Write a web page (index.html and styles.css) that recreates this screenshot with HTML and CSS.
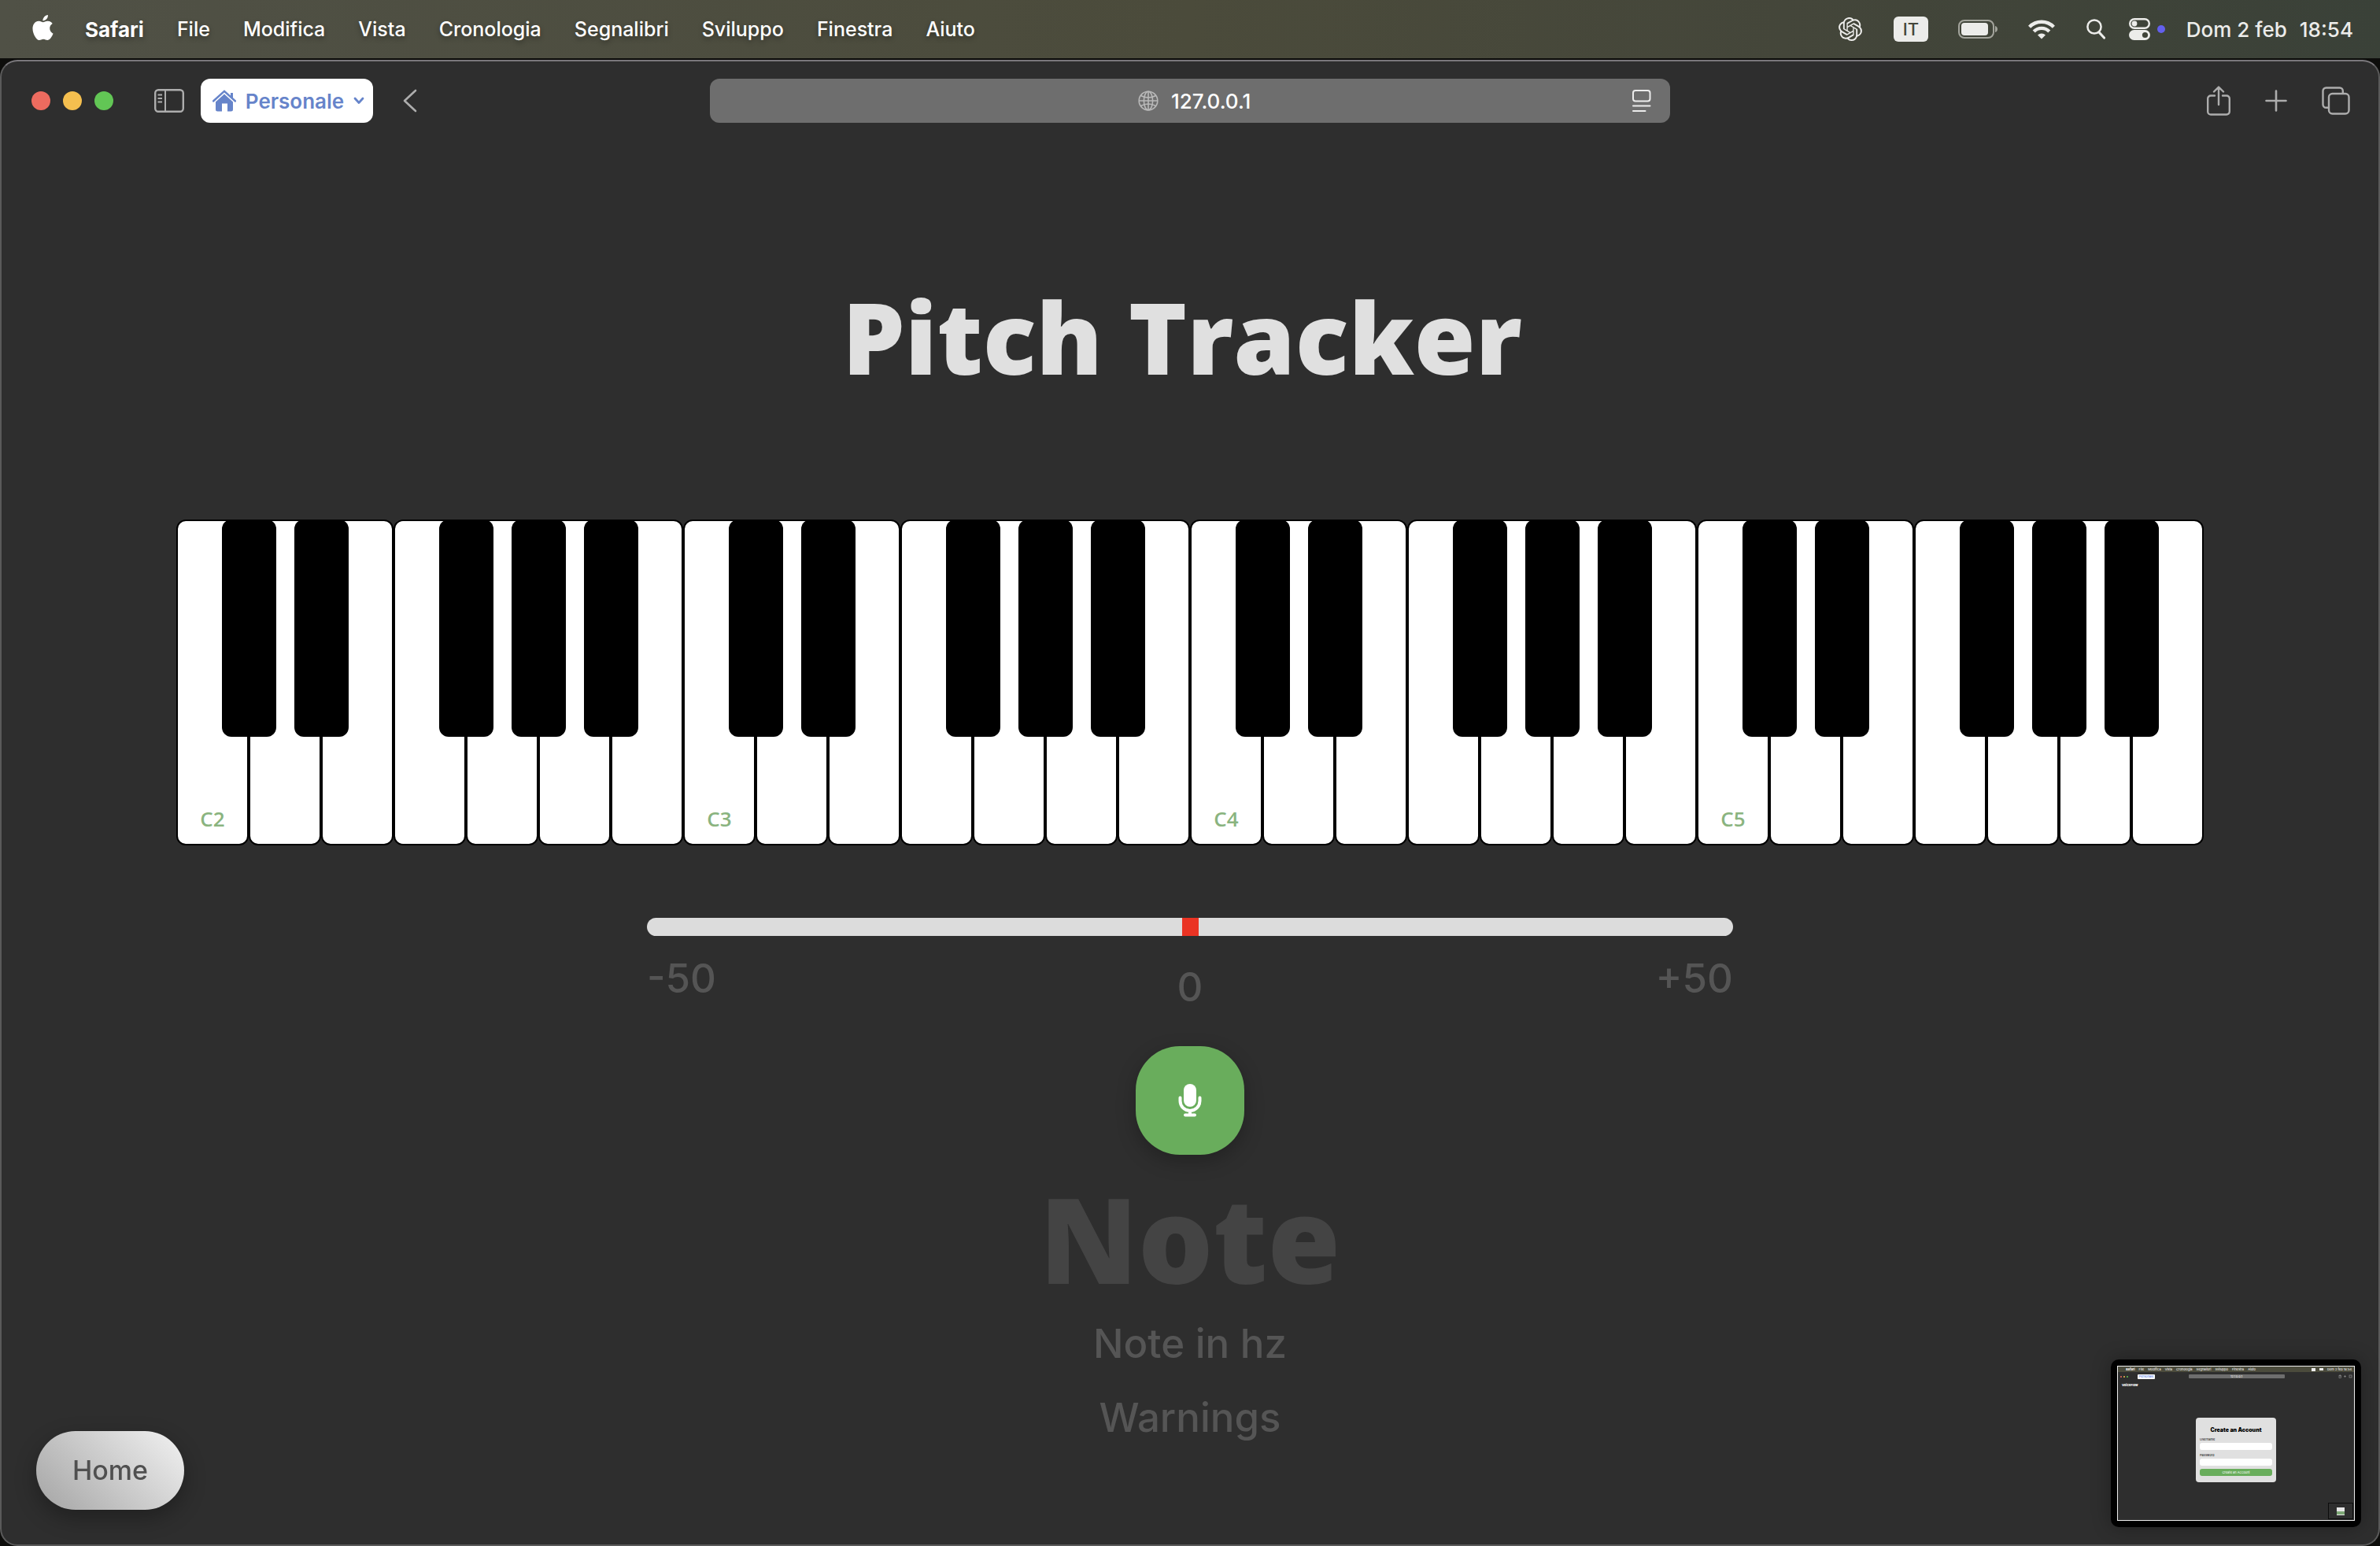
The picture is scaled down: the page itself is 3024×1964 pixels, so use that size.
FILE: index.html
```html
<!DOCTYPE html>
<html lang="it">
<head>
<meta charset="utf-8">
<meta name="viewport" content="width=device-width, initial-scale=1">
<title>Pitch Tracker</title>
<link rel="stylesheet" href="styles.css">
</head>
<body>
<header class="menubar">
  <nav class="menus">
    <svg class="apple" viewBox="2 0 20 24" width="27" height="32" fill="#fff"><path d="M12.152 6.896c-.948 0-2.415-1.078-3.96-1.04-2.04.027-3.91 1.183-4.961 3.014-2.117 3.675-.546 9.103 1.519 12.09 1.013 1.454 2.208 3.09 3.792 3.039 1.52-.065 2.09-.987 3.935-.987 1.831 0 2.35.987 3.96.948 1.637-.026 2.676-1.48 3.676-2.948 1.156-1.688 1.636-3.325 1.662-3.415-.039-.013-3.182-1.221-3.22-4.857-.026-3.04 2.48-4.494 2.597-4.559-1.429-2.09-3.623-2.324-4.39-2.376-2-.156-3.675 1.09-4.61 1.09zM15.53 3.83c.843-1.012 1.4-2.427 1.245-3.83-1.207.052-2.662.805-3.532 1.818-.78.896-1.454 2.338-1.273 3.714 1.338.104 2.715-.688 3.559-1.701"/></svg>
    <span class="app-name">Safari</span>
    <span>File</span>
    <span>Modifica</span>
    <span>Vista</span>
    <span>Cronologia</span>
    <span>Segnalibri</span>
    <span>Sviluppo</span>
    <span>Finestra</span>
    <span>Aiuto</span>
  </nav>
  <div class="status">
    <svg class="gpt" viewBox="0 0 24 24" width="30" height="30" fill="#ececea"><path d="M22.2819 9.8211a5.9847 5.9847 0 0 0-.5157-4.9108 6.0462 6.0462 0 0 0-6.5098-2.9A6.0651 6.0651 0 0 0 4.9807 4.1818a5.9847 5.9847 0 0 0-3.9977 2.9 6.0462 6.0462 0 0 0 .7427 7.0966 5.98 5.98 0 0 0 .511 4.9107 6.051 6.051 0 0 0 6.5146 2.9001A5.9847 5.9847 0 0 0 13.2599 24a6.0557 6.0557 0 0 0 5.7718-4.2058 5.9894 5.9894 0 0 0 3.9977-2.9001 6.0557 6.0557 0 0 0-.7475-7.0729zm-9.022 12.6081a4.4755 4.4755 0 0 1-2.8764-1.0408l.1419-.0804 4.7783-2.7582a.7948.7948 0 0 0 .3927-.6813v-6.7369l2.02 1.1686a.071.071 0 0 1 .038.052v5.5826a4.504 4.504 0 0 1-4.4945 4.4944zm-9.6607-4.1254a4.4708 4.4708 0 0 1-.5346-3.0137l.142.0852 4.783 2.7582a.7712.7712 0 0 0 .7806 0l5.8428-3.3685v2.3324a.0804.0804 0 0 1-.0332.0615L9.74 19.9502a4.4992 4.4992 0 0 1-6.1408-1.6464zM2.3408 7.8956a4.485 4.485 0 0 1 2.3655-1.9728V11.6a.7664.7664 0 0 0 .3879.6765l5.8144 3.3543-2.0201 1.1685a.0757.0757 0 0 1-.071 0l-4.8303-2.7865A4.504 4.504 0 0 1 2.3408 7.872zm16.5963 3.8558L13.1038 8.364 15.1192 7.2a.0757.0757 0 0 1 .071 0l4.8303 2.7913a4.4944 4.4944 0 0 1-.6765 8.1042v-5.6772a.79.79 0 0 0-.407-.667zm2.0107-3.0231l-.142-.0852-4.7735-2.7818a.7759.7759 0 0 0-.7854 0L9.409 9.2297V6.8974a.0662.0662 0 0 1 .0284-.0615l4.8303-2.7866a4.4992 4.4992 0 0 1 6.6802 4.66zM8.3065 12.863l-2.02-1.1638a.0804.0804 0 0 1-.038-.0567V6.0742a4.4992 4.4992 0 0 1 7.3757-3.4537l-.142.0805L8.704 5.459a.7948.7948 0 0 0-.3927.6813zm1.0976-2.3654l2.602-1.4998 2.6069 1.4998v2.9994l-2.5974 1.4997-2.6067-1.4997Z"/></svg>
    <span class="lang">IT</span>
    <svg class="battery" viewBox="0 0 51 24" width="51" height="24"><rect x="1" y="1" width="44" height="22" rx="7" fill="none" stroke="#a3a49c" stroke-width="2"/><rect x="4" y="4" width="34" height="16" rx="4" fill="#ececea"/><path d="M47 8c4 1 4 7 0 8z" fill="#a3a49c"/></svg>
    <svg class="wifi" viewBox="0 0 34 26" width="34" height="26"><g fill="none" stroke="#ececea" stroke-width="4.4"><path d="M1.6 10.2a21.6 21.6 0 0 1 30.800 0"/><path d="M7.200 16a13.800 13.800 0 0 1 19.600 0"/></g><path d="M17 25.500l-5-5a7.200 7.200 0 0 1 10 0z" fill="#ececea"/></svg>
    <svg class="search" viewBox="0 0 24 26" width="24" height="26" fill="none" stroke="#ececea" stroke-width="2.500"><circle cx="10" cy="10" r="8.600"/><path d="M16 17l6.500 7" stroke-width="3.200" stroke-linecap="round"/></svg>
    <div class="control">
      <svg viewBox="0 0 27 28" width="27" height="28"><rect x="1.200" y="1.200" width="24.600" height="11.600" rx="5.800" fill="none" stroke="#ececea" stroke-width="2.400"/><circle cx="7" cy="7" r="3.400" fill="#ececea"/><rect y="15" width="27" height="13" rx="6.500" fill="#ececea"/><circle cx="20.500" cy="21.500" r="3.600" fill="#3f4338"/></svg>
      <i class="live-dot"></i>
    </div>
    <time class="clock"><span>Dom 2 feb</span><span>18:54</span></time>
  </div>
</header>

<div class="window">
  <div class="toolbar">
    <div class="tools-left">
      <div class="lights"><i class="light red"></i><i class="light yellow"></i><i class="light green"></i></div>
      <button class="tool sidebar" aria-label="Barra laterale"><svg viewBox="0 0 38 30" width="38" height="30" fill="none" stroke="#adadad" stroke-width="2.400"><rect x="1.200" y="1.200" width="35.600" height="27.600" rx="4"/><path d="M14 1v28M4.500 7.500h5.500M4.500 12h5.500M4.500 16.500h5.500" stroke-width="2"/></svg></button>
      <button class="profile"><svg viewBox="0 0 30 28" width="30" height="28"><path d="M1 14.500L15 1.800 29 14.500" fill="none" stroke="#6684ca" stroke-width="2.400" stroke-linecap="round"/><path d="M23 4h3v7l-3-3z" fill="#6684ca"/><path d="M15 5.500l11 10V25a2.500 2.500 0 0 1-2.500 2.500H19V17.500h-7V27.500H6.500A2.500 2.500 0 0 1 4 25v-9.500z" fill="#6684ca"/></svg><span>Personale</span><svg class="caret" viewBox="0 0 14 10" width="14" height="10" fill="none" stroke="#6684ca" stroke-width="2.800" stroke-linecap="round" stroke-linejoin="round"><path d="M2 2l5 5.500L12 2"/></svg></button>
      <button class="tool back" aria-label="Indietro"><svg viewBox="0 0 18 30" width="18" height="30" fill="none" stroke="#adadad" stroke-width="2.600" stroke-linecap="round" stroke-linejoin="round"><path d="M16 2L2 15l14 13"/></svg></button>
    </div>
    <div class="address">
      <svg viewBox="0 0 26 26" width="26" height="26" fill="none" stroke="#b9b9b9" stroke-width="1.600"><circle cx="13" cy="13" r="11.800"/><ellipse cx="13" cy="13" rx="5.600" ry="11.800"/><path d="M13 1v24M1 13h24M3.500 6.500q9.500 5 19 0M3.500 19.500q9.500-5 19 0"/></svg>
      <input class="url" type="text" value="127.0.0.1" aria-label="Indirizzo">
      <button class="reader" aria-label="Menu pagina"><svg viewBox="0 0 24 28" width="24" height="28" fill="none" stroke="#ececec" stroke-width="2"><rect x="1" y="1" width="21.500" height="13.500" rx="3"/><path d="M1 20.500h21.500M1 27h15.500" stroke-linecap="round"/></svg></button>
    </div>
    <div class="tools-right">
      <button class="tool" aria-label="Condividi"><svg viewBox="0 0 30 38" width="30" height="38" fill="none" stroke="#adadad" stroke-width="2.400" stroke-linecap="round" stroke-linejoin="round"><path d="M10 12.500H5a3.800 3.800 0 0 0-3.800 3.800v16.400A3.800 3.800 0 0 0 5 36.500h20a3.800 3.800 0 0 0 3.800-3.800V16.300a3.800 3.800 0 0 0-3.800-3.800h-5M15 24V2M9 7.500L15 1.500l6 6"/></svg></button>
      <button class="tool" aria-label="Nuovo pannello"><svg viewBox="0 0 28 28" width="28" height="28" stroke="#adadad" stroke-width="2.600" stroke-linecap="round"><path d="M14 1.500v25M1.500 14h25"/></svg></button>
      <button class="tool" aria-label="Panoramica pannelli"><svg viewBox="0 0 36 36" width="36" height="36" fill="none" stroke="#adadad" stroke-width="2.400"><rect x="9" y="9" width="25.500" height="25.500" rx="4.500"/><path d="M9 26.800H5.500a4 4 0 0 1-4-4V5.500a4 4 0 0 1 4-4h17.300a4 4 0 0 1 4 4V9"/></svg></button>
    </div>
  </div>

  <main class="tracker">
    <h1 class="title">Pitch Tracker</h1>
    <div class="piano">
      <div class="key sharp"><span>C2</span></div><div class="key sharp"></div><div class="key"></div><div class="key sharp"></div><div class="key sharp"></div><div class="key sharp"></div><div class="key"></div>
      <div class="key sharp"><span>C3</span></div><div class="key sharp"></div><div class="key"></div><div class="key sharp"></div><div class="key sharp"></div><div class="key sharp"></div><div class="key"></div>
      <div class="key sharp"><span>C4</span></div><div class="key sharp"></div><div class="key"></div><div class="key sharp"></div><div class="key sharp"></div><div class="key sharp"></div><div class="key"></div>
      <div class="key sharp"><span>C5</span></div><div class="key sharp"></div><div class="key"></div><div class="key sharp"></div><div class="key sharp"></div><div class="key sharp"></div><div class="key"></div>
    </div>
    <div class="meter">
      <div class="bar"><i class="needle"></i></div>
      <div class="scale"><span>-50</span><span class="zero">0</span><span>+50</span></div>
    </div>
    <button class="mic" aria-label="Microfono"><svg viewBox="0 0 30 42" width="30" height="42"><rect x="7" y="0" width="16" height="29" rx="8" fill="#fff"/><path d="M2.500 17.500v4a12.500 12.500 0 0 0 25 0v-4M15 34v5M9 39.500h12" fill="none" stroke="#fff" stroke-width="4" stroke-linecap="round"/></svg></button>
    <p class="note">Note</p>
    <p class="detail">Note in hz</p>
    <p class="detail">Warnings</p>
  </main>
</div>

<a class="home" href="#">Home</a>

<aside class="preview">
  <div class="shot">
    <div class="mini-menubar"><b>Safari</b><span>File</span><span>Modifica</span><span>Vista</span><span>Cronologia</span><span>Segnalibri</span><span>Sviluppo</span><span>Finestra</span><span>Aiuto</span><i class="mini-lang"></i><i class="mini-battery"></i><span>Dom 2 feb 18:54</span></div>
    <div class="mini-toolbar">
      <div class="mini-left"><i class="red"></i><i class="yellow"></i><i class="green"></i><span class="mini-profile">Personale</span></div>
      <span class="mini-url">127.0.0.1</span>
      <div class="mini-right"><svg viewBox="0 0 18 5" width="18" height="5" fill="none" stroke="#999" stroke-width=".6"><rect x="1" y="1.500" width="2.500" height="3"/><path d="M2.200 0v3M7 2.500h3M8.500 1v3"/><rect x="14" y="1" width="3" height="3"/></svg></div>
    </div>
    <b class="mini-brand">VoiceFlow</b>
    <div class="mini-card">
      <h2>Create an Account</h2>
      <label for="user">Username</label><input id="user" type="text" tabindex="-1">
      <label for="pass">Password</label><input id="pass" type="password" tabindex="-1">
      <button tabindex="-1">Create an Account</button>
    </div>
    <div class="mini-thumb"><i></i></div>
  </div>
</aside>
</body>
</html>
```
FILE: styles.css
```css
* { box-sizing: border-box; }

body {
  margin: 0;
  min-height: 100vh;
  display: flex;
  flex-direction: column;
  gap: 2px;
  background: #0d0d0b;
  color: #fff;
  font-family: Inter, "Liberation Sans", sans-serif;
}

button, input { font: inherit; color: inherit; border: 0; padding: 0; background: none; }
p, h1, h2 { margin: 0; }
svg { display: block; }

/* System menu bar */
.menubar {
  height: 74px;
  flex: none;
  display: flex;
  justify-content: space-between;
  align-items: center;
  padding: 0 34px 0 41px;
  background: linear-gradient(90deg, #505146, #4b4b3b 50%, #44463a 75%, #3a4138);
  font-size: 25px;
  font-weight: 500;
}
.menus { display: flex; align-items: center; gap: 42px; text-shadow: 0 3px 6px rgba(0, 0, 0, .35); }
.apple { margin: -4px -2px 0 0; }
.app-name { font-size: 26px; font-weight: 700; }
.status { display: flex; align-items: center; color: #ececea; }
.gpt { margin-right: 40px; }
.lang {
  width: 44px;
  height: 32px;
  margin-right: 38px;
  border-radius: 6px;
  background: #ececea;
  color: #44463a;
  font-size: 22px;
  line-height: 32px;
  text-align: center;
}
.battery { margin-right: 38px; }
.wifi { margin-right: 40px; }
.search { margin-right: 30px; }
.control { display: flex; align-items: center; gap: 9px; margin-right: 27px; }
.live-dot { width: 10px; height: 10px; border-radius: 50%; background: #6360ee; }
.clock { display: flex; gap: 16px; font-size: 26px; }

/* Browser window */
.window {
  flex: 1;
  display: flex;
  flex-direction: column;
  border: 2px solid #5a5a5a;
  border-top-color: #7a787c;
  border-radius: 22px;
  background: #2e2e2e;
}
.toolbar {
  display: grid;
  grid-template-columns: 1fr 1220px 1fr;
  align-items: center;
  padding: 22px 36px;
  font-size: 25px;
  font-weight: 500;
}
.tools-left { display: flex; align-items: center; padding-left: 2px; }
.lights { display: flex; gap: 16px; margin-right: 52px; }
.light { width: 24px; height: 24px; border-radius: 50%; }
.red { background: #ed6b5f; }
.yellow { background: #f5bf4f; }
.green { background: #62c655; }
.sidebar { margin-right: 21px; }
.profile {
  width: 219px;
  height: 56px;
  display: flex;
  align-items: center;
  justify-content: space-between;
  padding: 0 11px 0 15px;
  border-radius: 12px;
  background: #fff;
  color: #6684ca;
  font-size: 26px;
  font-weight: 600;
}
.back { margin-left: 38px; }
.address {
  height: 56px;
  display: grid;
  grid-template-columns: 1fr 112px 1fr;
  align-items: center;
  gap: 16px;
  padding-right: 24px;
  padding-left: 88px;
  border-radius: 12px;
  background: #6e6e6e;
}
.address > svg { justify-self: end; }
.url { width: 112px; font-size: 26px; outline: 0; }
.reader { justify-self: end; }
.tools-right { display: flex; align-items: center; justify-content: flex-end; gap: 44px; }

/* Pitch tracker page */
.tracker {
  flex: 1;
  display: flex;
  flex-direction: column;
  align-items: center;
  padding: 174px 48px 48px;
}
.title, .note, .key { font-family: "Open Sans", "Noto Sans", sans-serif; }
.title {
  margin-bottom: 158px;
  padding-right: 20px;
  color: #e0e0e0;
  font-size: 126px;
  font-weight: 800;
  line-height: 150px;
}
.piano { display: flex; margin-bottom: 92px; }
.key {
  position: relative;
  width: 92px;
  height: 414px;
  display: flex;
  align-items: flex-end;
  justify-content: center;
  padding-bottom: 14px;
  border: 2px solid #000;
  border-radius: 12px;
  background: #fff;
  color: #8ab47f;
  font-size: 26px;
  font-weight: 600;
  line-height: 36px;
}
.sharp::after {
  content: "";
  position: absolute;
  z-index: 1;
  top: -2px;
  right: -37px;
  width: 69px;
  height: 276px;
  border-radius: 12px;
  background: #000;
}
.meter { width: 1380px; max-width: 100%; margin-bottom: 45px; }
.bar { height: 23px; display: flex; justify-content: center; border-radius: 12px; background: #dcdcdc; }
.needle { width: 21px; background: #ea3323; }
.scale {
  display: grid;
  grid-template-columns: 1fr auto 1fr;
  padding-top: 24px;
  color: #555;
  font-size: 51px;
  font-weight: 500;
  line-height: 60px;
}
.scale span:last-child { text-align: right; }
.zero { padding-top: 11px; }
.mic {
  width: 138px;
  height: 138px;
  display: grid;
  place-items: center;
  margin-bottom: 16px;
  border-radius: 56px;
  background: #69ad5c;
  box-shadow: 0 8px 24px rgba(0, 0, 0, .25);
}
.note { margin-bottom: 14px; color: #444; font-size: 150px; font-weight: 800; line-height: 180px; }
.detail { margin-bottom: 34px; color: #555; font-size: 51px; font-weight: 500; line-height: 60px; }

.home {
  position: fixed;
  left: 46px;
  bottom: 46px;
  height: 100px;
  padding: 0 46px;
  border-radius: 50px;
  background: linear-gradient(45deg, #a4a4a4, #f2f2f2);
  box-shadow: 0 10px 28px rgba(0, 0, 0, .3);
  color: #505050;
  font-size: 34px;
  font-weight: 500;
  line-height: 100px;
  text-decoration: none;
}

/* Floating screenshot preview */
.preview {
  position: fixed;
  right: 24px;
  bottom: 24px;
  padding: 8px;
  border-radius: 10px;
  background: #000;
  box-shadow: 0 0 24px rgba(0, 0, 0, .3);
}
.shot {
  position: relative;
  width: 302px;
  height: 197px;
  border: 1px solid #eee;
  background: #2e2e2e;
  font-size: 4px;
  line-height: 6px;
}
.mini-menubar { display: flex; gap: 5px; align-items: center; height: 7px; padding: 0 3px 0 10px; background: #4b4b3c; }
.mini-lang { width: 5px; height: 4px; margin-left: auto; background: #eee; }
.mini-battery { width: 5px; height: 3px; background: #eee; }
.mini-toolbar { display: grid; grid-template-columns: 1fr 122px 1fr; align-items: center; height: 11px; padding: 0 2px 0 3px; }
.mini-left { display: flex; gap: 2px; align-items: center; }
.mini-left i { width: 2px; height: 2px; border-radius: 50%; }
.mini-profile { width: 22px; margin-left: 10px; border-radius: 1px; background: #fff; color: #3d6be0; text-align: center; }
.mini-url { height: 5px; border-radius: 1px; background: #6e6e6e; line-height: 5px; text-align: center; }
.mini-right { justify-self: end; }
.mini-brand { display: block; padding: 3px 5px; font-size: 4px; font-weight: 800; }
.mini-card {
  width: 102px;
  display: flex;
  flex-direction: column;
  margin: 35px auto 0;
  padding: 12px 5px 8px;
  border-radius: 4px;
  background: #e0e0e0;
  color: #000;
}
.mini-card h2 { margin-bottom: 5px; font-size: 7px; font-weight: 900; line-height: 8px; text-align: center; }
.mini-card label { margin-bottom: 1px; }
.mini-card input { height: 9px; margin-bottom: 4px; border-radius: 3px; background: #fff; }
.mini-card button { height: 9px; border-radius: 3px; background: #69ad5c; color: #fff; line-height: 9px; }
.mini-thumb {
  position: absolute;
  right: 1px;
  bottom: 1px;
  width: 32px;
  height: 21px;
  display: grid;
  place-items: center;
  border: 1px solid #0c0c0c;
}
.mini-thumb i { width: 10px; height: 10px; background: linear-gradient(#e6e6e6 55%, #7da775 55% 90%, #e6e6e6 90%); }
```
